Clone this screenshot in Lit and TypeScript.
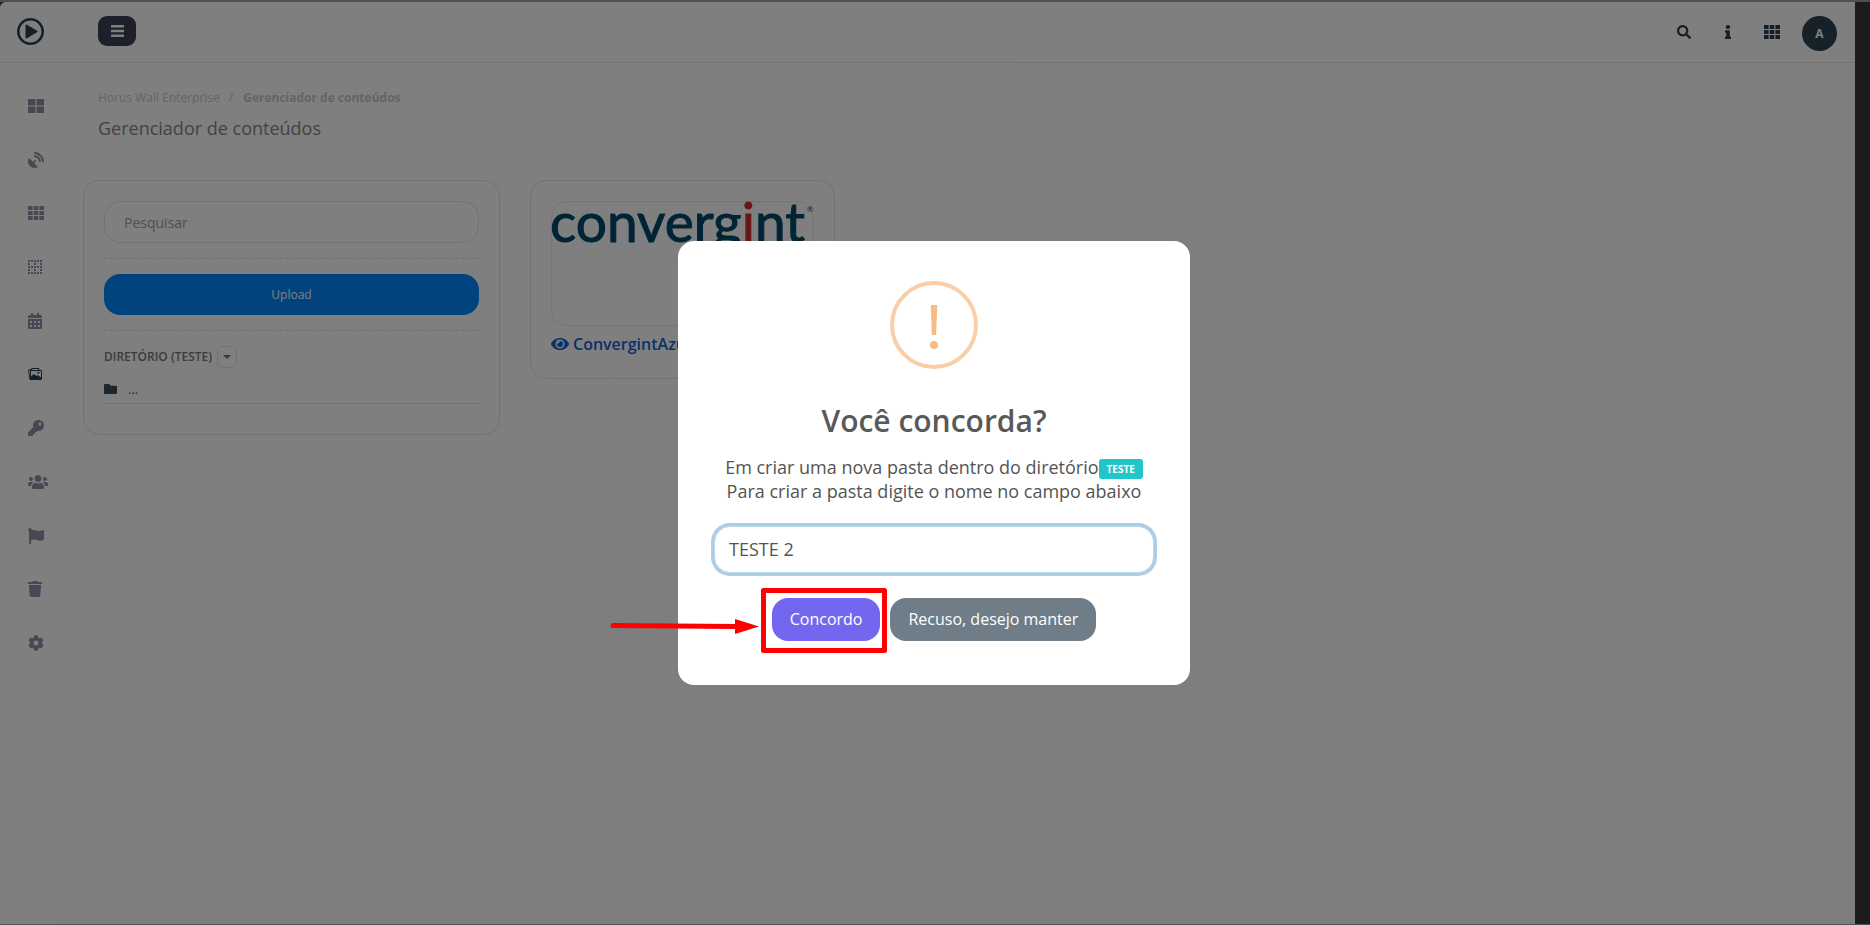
import { LitElement, html, css, svg } from "lit";
import { customElement, state } from "lit/decorators.js";

interface Glyph {
  box: string;
  w: number;
  h: number;
  d: string;
}

/** Builds a path of equal squares laid out on a grid. */
const squares = (xs: number[], ys: number[], w: number, h: number, skip: (c: number, r: number) => boolean = () => false) =>
  ys.map((y, r) => xs.map((x, c) => (skip(c, r) ? "" : `M${x} ${y}h${w}v${h}h-${w}z`)).join("")).join("");

const ICONS: Record<string, Glyph> = {
  large: { box: "0 0 16 14", w: 16, h: 14, d: squares([0, 8.6], [0, 7.6], 7.4, 6.4) },
  dish: {
    box: "0 0 512 512", w: 16, h: 16,
    d: "M305.4 462.6c7.4 7.3 6.2 20.1-3 25-77.7 41.8-176.7 29.9-242.3-35.7C-5.5 386.3-17.4 287.4 24.4 209.6c4.9-9.1 17.7-10.3 25-3l116.8 116.8 27.4-27.4c-.7-2.6-1.6-5-1.6-7.8a32 32 0 1 1 32 32c-2.8 0-5.2-.9-7.8-1.6l-27.4 27.4zM512 303.1a16.1 16.1 0 0 1-16 17h-32.1a16 16 0 0 1-15.9-15C440.5 175.5 336.5 70.5 207 63.5a15.8 15.8 0 0 1-15-15.9V16A16.1 16.1 0 0 1 209 0C372.3 8.600 503.5 139.8 512 303.100zm-96-.3a16.200 16.200 0 0 1-16.100 17.300h-32.300a16.100 16.100 0 0 1-15.900-14.700c-6.900-77-68.100-138.900-144.900-145.200a15.900 15.900 0 0 1-14.800-15.900v-32.200a16.100 16.100 0 0 1 17.300-16.100C319.500 104.500 407.600 192.600 416 302.800z",
  },
  grid: { box: "0 0 16 14", w: 16, h: 14, d: squares([0, 5.7, 11.4], [0, 5, 10], 4.6, 4) },
  dots: { box: "0 0 14 14", w: 14, h: 14, d: squares([0, 3, 6, 9, 12], [0, 3, 6, 9, 12], 2, 2, (c, r) => r % 2 === 1 && c % 2 === 1) },
  calendar: {
    box: "0 0 14 16", w: 14, h: 16,
    d: "M3 0h2v2h4V0h2v2h1.500A1.500 1.500 0 0 1 14 3.500V5H0V3.500A1.500 1.500 0 0 1 1.500 2H3zM0 6h14v8.500a1.500 1.500 0 0 1-1.500 1.500h-11A1.500 1.500 0 0 1 0 14.500zM2 8v2h2V8zm4 0v2h2V8zm4 0v2h2V8zM2 12v2h2v-2zm4 0v2h2v-2zm4 0v2h2v-2z",
  },
  images: {
    box: "0 0 14 12", w: 14, h: 12,
    d: "M4 0h6.500a.8.8 0 0 1 .8.8V2h1.700a1 1 0 0 1 1 1v8a1 1 0 0 1-1 1H2.500a1 1 0 0 1-1-.8L0 2.500A1 1 0 0 1 .8 1.400L3.200 1V.8A.8.8 0 0 1 4 0zM4.200 1v1h6V1zM1 2.400L2 8.500V2.200zM3 3v5.500L6 6l2.200 2L9.500 7 13 9.500V3zM10.500 3.800a1 1 0 1 1 0 2 1 1 0 0 1 0-2z",
  },
  key: {
    box: "0 0 512 512", w: 16, h: 16,
    d: "M512 176c0 97.200-78.800 176-176 176-11.200 0-22.200-1.100-32.800-3.100l-24 27a24 24 0 0 1-18 8.100H224v40c0 13.300-10.700 24-24 24h-40v40c0 13.300-10.700 24-24 24H24c-13.300 0-24-10.700-24-24v-78.100c0-6.400 2.500-12.500 7-17l161.800-161.800C163.100 213.800 160 195.300 160 176 160 78.800 238.800 0 336 0c97.500 0 176 78.500 176 176zM336 128c0 26.500 21.500 48 48 48s48-21.500 48-48-21.500-48-48-48-48 21.500-48 48z",
  },
  users: {
    box: "0 0 640 512", w: 20, h: 16,
    d: "M96 224c35.300 0 64-28.700 64-64s-28.700-64-64-64-64 28.700-64 64 28.700 64 64 64zm448 0c35.300 0 64-28.700 64-64s-28.700-64-64-64-64 28.700-64 64 28.700 64 64 64zm32 32h-64c-17.600 0-33.500 7.100-45.100 18.600 40.300 22.100 68.900 62 75.100 109.400h66c17.700 0 32-14.300 32-32v-32c0-35.300-28.700-64-64-64zm-256 0c61.900 0 112-50.100 112-112S381.900 32 320 32 208 82.100 208 144s50.100 112 112 112zm76.800 32h-8.300c-20.800 10-43.900 16-68.500 16s-47.600-6-68.500-16h-8.300C179.600 288 128 339.600 128 403.200V432c0 26.500 21.500 48 48 48h288c26.500 0 48-21.500 48-48v-28.800c0-63.600-51.600-115.200-115.200-115.200zm-223.700-13.400C161.500 263.100 145.600 256 128 256H64c-35.300 0-64 28.700-64 64v32c0 17.700 14.300 32 32 32h65.900c6.300-47.400 34.900-87.300 75.200-109.400z",
  },
  flag: {
    box: "0 0 512 512", w: 16, h: 16,
    d: "M349.600 98.800C296 98.800 251.700 64 184.300 64c-25 0-47.300 4.400-68 12a56 56 0 0 0 3.600-23.500C118.100 24 94.800 1.200 66.300 0 34.300-1.300 8 24.300 8 56c0 19 9.500 35.800 24 45.900V488c0 13.300 10.700 24 24 24h16c13.300 0 24-10.700 24-24v-94.400c28.300-12.100 63.600-22.100 114.400-22.100 53.600 0 97.800 34.800 165.200 34.800 48.200 0 86.700-16.300 122.500-40.900 8.700-5.900 13.900-15.800 13.900-26.400V95.900c0-23.400-24.300-38.900-45.500-29-34.300 16-76.500 31.900-116.900 31.900z",
  },
  trash: {
    box: "0 0 448 512", w: 14, h: 16,
    d: "M432 32H312l-9.400-18.700A24 24 0 0 0 281.100 0H166.800a23.700 23.700 0 0 0-21.400 13.300L136 32H16A16 16 0 0 0 0 48v32a16 16 0 0 0 16 16h416a16 16 0 0 0 16-16V48a16 16 0 0 0-16-16zM32 128l21.200 339a48 48 0 0 0 47.900 45h245.800a48 48 0 0 0 47.900-45L416 128z",
  },
  cog: {
    box: "0 0 512 512", w: 16, h: 16,
    d: "M487.4 315.7l-42.6-24.6c4.3-23.2 4.3-47 0-70.2l42.6-24.6c4.9-2.8 7.1-8.6 5.5-14-11.1-35.6-30-67.8-54.7-94.6-3.8-4.1-10-5.1-14.8-2.3L380.8 110c-17.9-15.4-38.5-27.3-60.8-35.1V25.8c0-5.6-3.9-10.5-9.4-11.7-36.7-8.2-74.3-7.8-109.2 0-5.5 1.2-9.4 6.1-9.4 11.7V75c-22.2 7.9-42.8 19.8-60.8 35.1L88.7 85.5c-4.9-2.8-11-1.9-14.8 2.3-24.7 26.7-43.6 58.9-54.7 94.6-1.7 5.4.6 11.2 5.5 14L67.3 221c-4.3 23.2-4.3 47 0 70.2l-42.6 24.6c-4.9 2.8-7.1 8.6-5.5 14 11.1 35.6 30 67.8 54.7 94.6 3.8 4.1 10 5.1 14.8 2.3l42.6-24.6c17.9 15.4 38.5 27.3 60.8 35.1v49.2c0 5.6 3.9 10.5 9.4 11.7 36.7 8.2 74.3 7.8 109.2 0 5.5-1.2 9.4-6.1 9.4-11.7v-49.2c22.2-7.9 42.8-19.8 60.8-35.1l42.6 24.6c4.9 2.8 11 1.9 14.8-2.3 24.7-26.7 43.6-58.9 54.7-94.6 1.5-5.5-.7-11.3-5.6-14.1zM256 336c-44.100 0-80-35.900-80-80s35.900-80 80-80 80 35.900 80 80-35.900 80-80 80z",
  },
  search: {
    box: "0 0 512 512", w: 14, h: 14,
    d: "M505 442.7L405.3 343c-4.500-4.500-10.600-7-17-7H372c27.600-35.300 44-79.700 44-128C416 93.100 322.900 0 208 0S0 93.100 0 208s93.100 208 208 208c48.300 0 92.700-16.400 128-44v16.300c0 6.400 2.500 12.500 7 17l99.700 99.700c9.400 9.400 24.600 9.400 33.900 0l28.300-28.300c9.400-9.400 9.400-24.600.1-34zM208 336c-70.700 0-128-57.200-128-128 0-70.700 57.200-128 128-128 70.700 0 128 57.200 128 128 0 70.700-57.200 128-128 128z",
  },
  info: {
    box: "0 0 192 512", w: 6, h: 14,
    d: "M20 424.200h20V279.800H20c-11 0-20-9-20-20V212c0-11 9-20 20-20h112c11 0 20 9 20 20v212.200h20c11 0 20 9 20 20V492c0 11-9 20-20 20H20c-11 0-20-9-20-20v-47.800c0-11 9-20 20-20zM96 0C56.200 0 24 32.200 24 72s32.200 72 72 72 72-32.200 72-72S135.800 0 96 0z",
  },
  bars: { box: "0 0 13 12", w: 13, h: 12, d: "M0 0h13v2.500H0zM0 4.700h13v2.500H0zM0 9.400h13v2.500H0z" },
  folder: {
    box: "0 64 512 384", w: 13, h: 10,
    d: "M464 128H272l-64-64H48C21.500 64 0 85.500 0 112v288c0 26.500 21.500 48 48 48h416c26.500 0 48-21.500 48-48V176c0-26.500-21.500-48-48-48z",
  },
  eye: {
    box: "0 0 576 512", w: 18, h: 16,
    d: "M572.500 241.400C518.300 135.600 410.900 64 288 64S57.700 135.600 3.500 241.400a32.400 32.400 0 0 0 0 29.200C57.700 376.400 165.100 448 288 448s230.300-71.600 284.500-177.400a32.400 32.400 0 0 0 0-29.200zM288 400a144 144 0 1 1 144-144 143.900 143.900 0 0 1-144 144zm0-240a95.300 95.300 0 0 0-25.300 3.800 47.900 47.900 0 0 1-66.900 66.900A95.800 95.800 0 1 0 288 160z",
  },
  caret: { box: "0 0 8 4", w: 8, h: 4, d: "M0 0h8L4 4z" },
};

const icon = (name: string) => {
  const g = ICONS[name];
  return html`<svg width=${g.w} height=${g.h} viewBox=${g.box} preserveAspectRatio="none" fill="currentColor" aria-hidden="true">
    ${svg`<path fill-rule="evenodd" d=${g.d}></path>`}
  </svg>`;
};

const NAV = [
  ["large", "Painel"],
  ["dish", "Transmissão"],
  ["grid", "Mosaicos"],
  ["dots", "Layouts"],
  ["calendar", "Agenda"],
  ["images", "Conteúdos"],
  ["key", "Acessos"],
  ["users", "Usuários"],
  ["flag", "Alertas"],
  ["trash", "Lixeira"],
  ["cog", "Configurações"],
];

@customElement("app-root")
export class AppRoot extends LitElement {
  @state() private folderName = "TESTE 2";

  static styles = css`
    :host {
      display: block;
      font-family: "Open Sans", "Noto Sans", sans-serif;
      font-size: 13px;
      color: #545454;
    }
    * { box-sizing: border-box; }
    svg { display: block; flex: none; }
    button, input { font: inherit; color: inherit; margin: 0; }
    button { cursor: pointer; border: 0; padding: 0; background: none; }
    a { color: inherit; text-decoration: none; }
    .window {
      min-height: 100vh;
      display: grid;
      grid-template-columns: 1fr 15px;
      background: #38383a;
      border-top: 2px solid #a19fac;
      border-bottom: 1px solid #a19fac;
    }
    .page {
      display: flex;
      flex-direction: column;
      background: linear-gradient(135deg, #fff 0%, #fff 25%, #fcfcff 55%, #fcfcff 100%);
      border-top-left-radius: 6px;
    }
    .topbar {
      display: flex;
      align-items: center;
      height: 61px;
      padding: 0 18px 0 17px;
      background: #fff;
      border-bottom: 1px solid #e6e6e8;
      border-top-left-radius: 6px;
      color: #2c3e50;
    }
    .brand { width: 81px; margin-bottom: 2px; }
    .menu {
      display: grid;
      place-items: center;
      width: 38px;
      height: 30px;
      margin-bottom: 2px;
      border-radius: 9px;
      background: #3b3f56;
      color: #fff;
    }
    .tools { display: flex; align-items: center; margin-left: auto; }
    .tool { display: grid; place-items: center; width: 40px; height: 36px; margin-left: 4px; }
    .avatar {
      display: grid;
      place-items: center;
      width: 35px;
      height: 35px;
      margin: 3px 0 0 10px;
      border-radius: 50%;
      background: #2f4254;
      color: #fff;
      font-size: 12px;
      font-weight: 700;
    }
    .body { display: flex; flex: 1; }
    .rail {
      display: flex;
      flex-direction: column;
      justify-content: space-between;
      width: 83px;
      height: 587px;
      margin-top: 18px;
      padding-left: 28px;
      color: #8e90a6;
    }
    .rail a { display: flex; align-items: center; width: 30px; height: 50px; }
    .rail .active { color: #2c3e50; }
    main { flex: 1; padding: 24px 30px 24px 0; }
    .crumbs {
      display: flex;
      padding-left: 15px;
      font-size: 12px;
      line-height: 22px;
      color: #c9c9c9;
    }
    .crumbs span { padding: 0 10px 0 9px; }
    .crumbs b { font-weight: 700; }
    h1 {
      margin: 6px 0 39px;
      padding-left: 15px;
      font-size: 18px;
      line-height: 26px;
      font-weight: 400;
      color: #868686;
    }
    .cards { display: flex; align-items: flex-start; gap: 30px; }
    .card { border: 1px solid #e4e4e6; border-radius: 16px; background: #fff; padding: 20px; }
    .folders { width: 417px; padding-bottom: 30px; }
    .files { width: 305px; }
    .search {
      display: block;
      width: 100%;
      height: 42px;
      padding: 0 19px;
      border: 1px solid #e4e4e6;
      border-radius: 16px;
      background: #fff;
      font-size: 14px;
    }
    .search::placeholder { color: #a0a0a0; opacity: 1; }
    hr { margin: 15px 0; border: 0; border-top: 1px dashed #dedee2; }
    .upload {
      display: block;
      width: 100%;
      height: 41px;
      border-radius: 16px;
      background: #0087ff;
      color: #fff;
      font-size: 12px;
    }
    .dir { display: flex; align-items: center; gap: 5px; font-size: 12px; line-height: 22px; font-weight: 600; color: #777; }
    .drop { display: grid; place-items: center; width: 20px; height: 22px; border: 1px solid #e4e4e6; border-radius: 5px; }
    .entry {
      display: flex;
      align-items: center;
      gap: 11px;
      margin-top: 10px;
      padding-bottom: 3px;
      border-bottom: 1px solid #e0e0e2;
      line-height: 22px;
    }
    .entry svg { color: #3a4a5a; }
    .thumb { height: 125px; border: 1px solid #e8e8ea; border-radius: 16px; }
    .thumb svg { overflow: visible; }
    .logo { font-family: Lato, sans-serif; font-size: 55px; fill: #00476b; stroke: #00476b; }
    .logo .accent { fill: #d52b2b; stroke: #d52b2b; }
    .mark { font-family: Lato, sans-serif; font-size: 8px; fill: #00476b; }
    .file {
      display: flex;
      align-items: center;
      gap: 4px;
      margin: 6px 0 2px;
      font-size: 16px;
      line-height: 24px;
      font-weight: 600;
      color: #1263d8;
    }
    .shade {
      position: fixed;
      inset: 0;
      display: grid;
      place-items: center;
      padding-right: 2px;
      background: rgba(0, 0, 0, 0.5);
    }
    .dialog {
      position: relative;
      display: flex;
      flex-direction: column;
      width: 512px;
      max-width: 100%;
      padding: 40px 32px 44px;
      border-radius: 16px;
      background: #fff;
      text-align: center;
    }
    .warn { align-self: center; }
    h2 { margin: 32px 0 14px; font-size: 30px; line-height: 40px; font-weight: 600; color: #595959; }
    .question { font-size: 18px; line-height: 24px; }
    .badge {
      padding: 3px 8px;
      border-radius: 3px;
      background: #23c6c8;
      color: #fff;
      font-size: 10px;
      line-height: 10px;
      font-weight: 700;
      vertical-align: middle;
    }
    .question label { display: block; }
    .name {
      height: 47px;
      margin: 23px 4px 25px;
      padding: 0 14px;
      border: 1px solid #b4dbed;
      border-radius: 16px;
      outline: 0;
      box-shadow: 0 0 0 3px #b0cbe6;
      font-size: 18px;
    }
    .actions { display: flex; justify-content: center; gap: 10px; }
    .action { height: 43px; padding: 0 18px; border-radius: 16px; color: #fff; font-size: 16px; font-weight: 500; }
    .yes { background: #7367f0; }
    .no { background: #6e7d88; }
    .pointer { position: absolute; left: -68px; top: 345px; }
  `;

  private onName(e: Event) {
    this.folderName = (e.target as HTMLInputElement).value;
  }

  render() {
    return html`
      <div class="window">
        <div class="page">
          <header class="topbar">
            <a class="brand" href="#" aria-label="Horus Wall">
              <svg width="27" height="27" viewBox="0 0 27 27" fill="none">
                <circle cx="13.500" cy="13.500" r="12.200" stroke="currentColor" stroke-width="2.600"></circle>
                <path d="M9.500 7.500v12l10-6z" fill="currentColor" stroke="currentColor" stroke-width="2" stroke-linejoin="round"></path>
              </svg>
            </a>
            <button class="menu" aria-label="Menu">${icon("bars")}</button>
            <div class="tools">
              <button class="tool" aria-label="Pesquisa">${icon("search")}</button>
              <button class="tool" aria-label="Informações">${icon("info")}</button>
              <button class="tool" aria-label="Aplicativos">${icon("grid")}</button>
              <button class="avatar">A</button>
            </div>
          </header>
          <div class="body">
            <nav class="rail">
              ${NAV.map(([name, label]) => html`<a href="#" class=${name === "images" ? "active" : ""} aria-label=${label}>${icon(name)}</a>`)}
            </nav>
            <main>
              <div class="crumbs"><a href="#">Horus Wall Enterprise</a><span>/</span><b>Gerenciador de conteúdos</b></div>
              <h1>Gerenciador de conteúdos</h1>
              <div class="cards">
                <section class="card folders">
                  <input class="search" type="search" placeholder="Pesquisar" aria-label="Pesquisar" />
                  <hr />
                  <button class="upload">Upload</button>
                  <hr />
                  <div class="dir">DIRETÓRIO (TESTE)<button class="drop" aria-label="Opções">${icon("caret")}</button></div>
                  <a class="entry" href="#">${icon("folder")}<span>...</span></a>
                </section>
                <section class="card files">
                  <div class="thumb">
                    <svg width="261" height="60" viewBox="0 0 261 60" role="img" aria-label="convergint">
                      <text class="logo" x="-2" y="40">converg<tspan class="accent">i</tspan>nt</text>
                      <text class="mark" x="255" y="10">®</text>
                    </svg>
                  </div>
                  <a class="file" href="#">${icon("eye")}ConvergintAzul</a>
                </section>
              </div>
            </main>
          </div>
        </div>
      </div>
      <div class="shade">
        <div class="dialog" role="dialog" aria-labelledby="title">
          <svg class="warn" width="88" height="88" viewBox="0 0 88 88">
            <circle cx="44" cy="44" r="42" fill="none" stroke="#facea8" stroke-width="4"></circle>
            <path d="M40.700 24h6.600l-1.200 30h-4.200z" fill="#f8bb86"></path>
            <circle cx="44" cy="64" r="4" fill="#f8bb86"></circle>
          </svg>
          <h2 id="title">Você concorda?</h2>
          <div class="question">
            Em criar uma nova pasta dentro do diretório<span class="badge">TESTE</span>
            <label for="name">Para criar a pasta digite o nome no campo abaixo</label>
          </div>
          <input id="name" class="name" type="text" .value=${this.folderName} @input=${this.onName} />
          <div class="actions">
            <button class="action yes">Concordo</button>
            <button class="action no">Recuso, desejo manter</button>
          </div>
          <svg class="pointer" width="280" height="68" viewBox="0 0 280 68" fill="none" stroke="#f00" stroke-width="5" aria-hidden="true">
            <path d="M3 39.500l122 1" stroke-linecap="round"></path>
            <path d="M125 33l24 7.500-24 7.500z" fill="#f00" stroke="none"></path>
            <path d="M153.500 4.500h121v60h-121z" stroke-linejoin="round"></path>
          </svg>
        </div>
      </div>
    `;
  }
}
